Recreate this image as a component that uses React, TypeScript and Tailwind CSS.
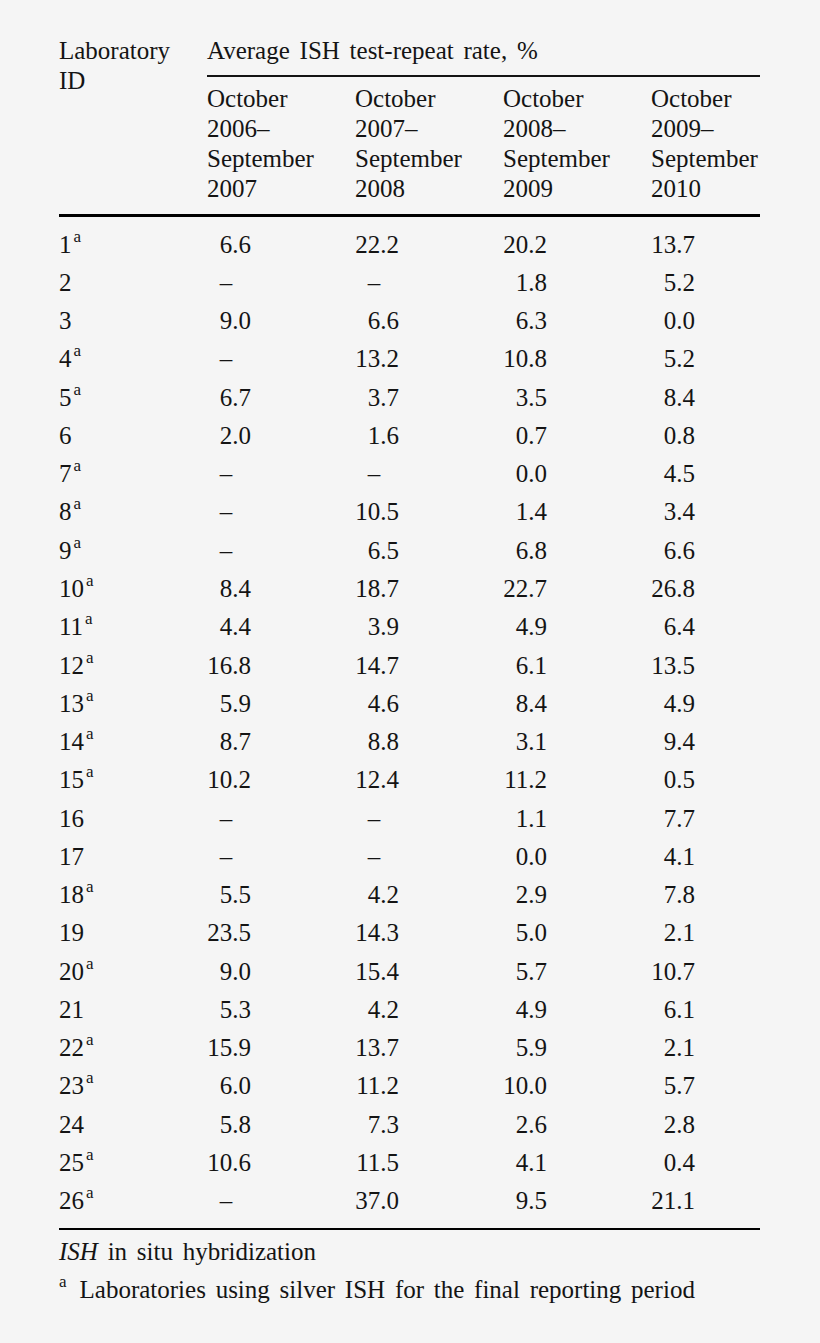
const rows: [string, boolean, (string | null)[]][] = [
  ['1', true, ['6.6', '22.2', '20.2', '13.7']],
  ['2', false, [null, null, '1.8', '5.2']],
  ['3', false, ['9.0', '6.6', '6.3', '0.0']],
  ['4', true, [null, '13.2', '10.8', '5.2']],
  ['5', true, ['6.7', '3.7', '3.5', '8.4']],
  ['6', false, ['2.0', '1.6', '0.7', '0.8']],
  ['7', true, [null, null, '0.0', '4.5']],
  ['8', true, [null, '10.5', '1.4', '3.4']],
  ['9', true, [null, '6.5', '6.8', '6.6']],
  ['10', true, ['8.4', '18.7', '22.7', '26.8']],
  ['11', true, ['4.4', '3.9', '4.9', '6.4']],
  ['12', true, ['16.8', '14.7', '6.1', '13.5']],
  ['13', true, ['5.9', '4.6', '8.4', '4.9']],
  ['14', true, ['8.7', '8.8', '3.1', '9.4']],
  ['15', true, ['10.2', '12.4', '11.2', '0.5']],
  ['16', false, [null, null, '1.1', '7.7']],
  ['17', false, [null, null, '0.0', '4.1']],
  ['18', true, ['5.5', '4.2', '2.9', '7.8']],
  ['19', false, ['23.5', '14.3', '5.0', '2.1']],
  ['20', true, ['9.0', '15.4', '5.7', '10.7']],
  ['21', false, ['5.3', '4.2', '4.9', '6.1']],
  ['22', true, ['15.9', '13.7', '5.9', '2.1']],
  ['23', true, ['6.0', '11.2', '10.0', '5.7']],
  ['24', false, ['5.8', '7.3', '2.6', '2.8']],
  ['25', true, ['10.6', '11.5', '4.1', '0.4']],
  ['26', true, [null, '37.0', '9.5', '21.1']],
];

const periods = [
  ['2006–', '2007'],
  ['2007–', '2008'],
  ['2008–', '2009'],
  ['2009–', '2010'],
];

// superscript footnote mark
function Sup({ className = '' }: { className?: string }) {
  return (
    <span className={`relative -top-[11px] text-[17px] leading-none align-baseline ${className}`}>a</span>
  );
}

function Value({ v }: { v: string | null }) {
  return (
    <div className="w-[148px] last:w-[109px]">
      <div className="w-[44px] text-right whitespace-nowrap">
        {v ?? (
          <>
            –<span className="invisible">.0</span>
          </>
        )}
      </div>
    </div>
  );
}

export default function App() {
  return (
    <div
      className="min-h-[1343px] bg-[#f5f5f5] pt-[36px] pl-[59px] text-[25px] text-[#141414] [word-spacing:3.5px]"
      style={{ fontFamily: '"Liberation Serif", "Times New Roman", serif' }}
    >
      <div className="w-[701px]">
        {/* header */}
        <div className="flex leading-[30px]">
          <div className="w-[148px] shrink-0">
            Laboratory
            <br />
            ID
          </div>
          <div className="flex-1">
            <div>Average ISH test-repeat rate, %</div>
            <div className="mt-[9px] h-[1.5px] bg-[#141414]" />
            <div className="flex pt-[7px]">
              {periods.map(([a, b], i) => (
                <div key={i} className={i === 3 ? 'w-[109px]' : 'w-[148px]'}>
                  October
                  <br />
                  {a}
                  <br />
                  September
                  <br />
                  {b}
                </div>
              ))}
            </div>
          </div>
        </div>
        <div className="mt-[10px] h-[3px] bg-black" />

        {/* body */}
        <div className="pt-[9px]">
          {rows.map(([id, sup, vals]) => (
            <div key={id} className="flex h-[38.28px] items-center leading-[38px]">
              <div className="w-[148px] shrink-0">
                {id}
                {sup && <Sup className="ml-[2px]" />}
              </div>
              {vals.map((v, i) => (
                <Value key={i} v={v} />
              ))}
            </div>
          ))}
        </div>
        <div className="mt-[8px] h-[2px] bg-black" />

        {/* notes */}
        <div className="pt-[3px] leading-[38px]">
          <div>
            <i>ISH</i> in situ hybridization
          </div>
          <div>
            <Sup className="mr-[13px]" />
            Laboratories using silver ISH for the final reporting period
          </div>
        </div>
      </div>
    </div>
  );
}
